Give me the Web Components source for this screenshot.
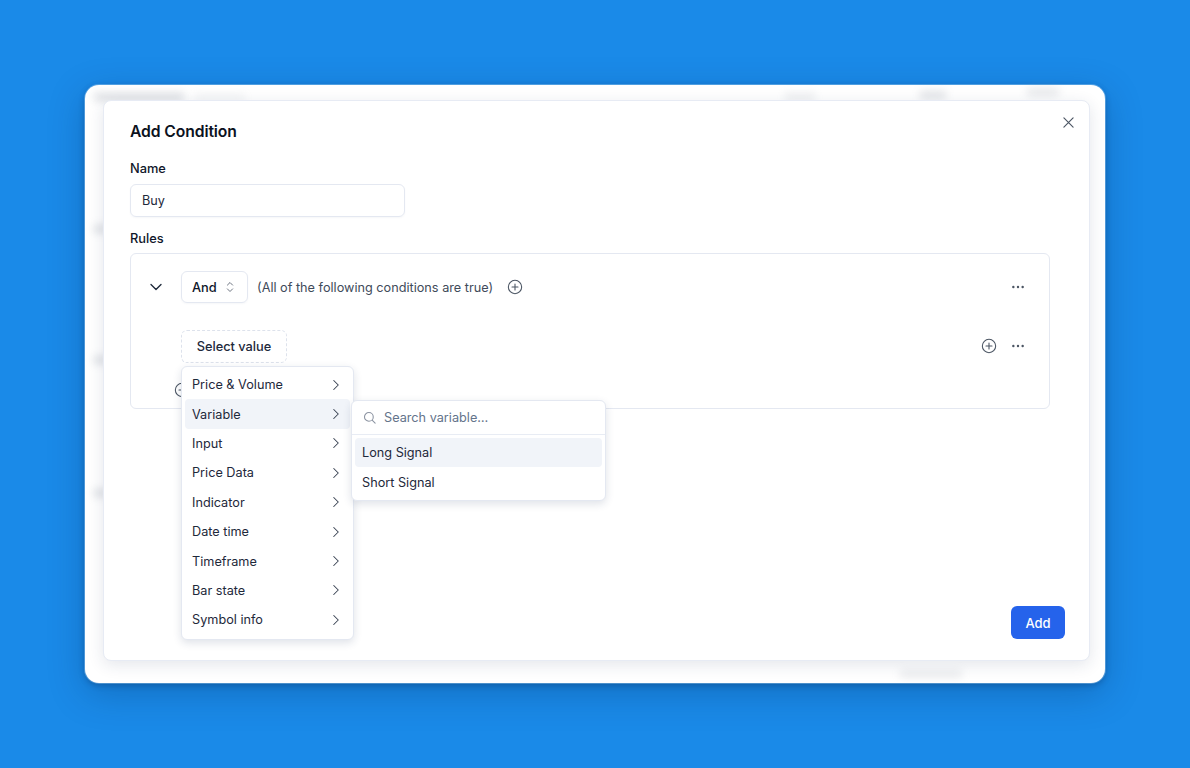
<!DOCTYPE html>
<html lang="en">
<head>
<meta charset="utf-8">
<title>Add Condition</title>
<style>
  html, body { margin: 0; height: 100%; }
  body { background: #1a8ae8; font-family: Inter, "Liberation Sans", sans-serif; overflow: hidden; }
</style>
</head>
<body>
<app-frame>
  <condition-dialog heading="Add Condition">
    <form-field label="Name"><text-box value="Buy"></text-box></form-field>
    <form-field label="Rules">
      <rule-box>
        <rule-row indent="0">
          <svg-icon slot="lead" name="chevron-down" size="20" color="#1e293b"></svg-icon>
          <and-select></and-select>
          <span-note>(All of the following conditions are true)</span-note>
          <svg-icon name="plus-circle" size="16" color="#4b5563" style="margin-left:14px"></svg-icon>
          <svg-icon slot="end" name="dots" size="16" color="#4b5563"></svg-icon>
        </rule-row>
        <rule-row indent="50" style="margin-top:27px">
          <dashed-select>Select value</dashed-select>
          <svg-icon slot="end" name="plus-circle" size="16" color="#4b5563" style="margin-right:13px"></svg-icon>
          <svg-icon slot="end" name="dots" size="16" color="#4b5563"></svg-icon>
        </rule-row>
        <rule-row indent="43" height="16" style="margin-top:20px">
          <svg-icon name="plus-circle" size="16" color="#4b5563"></svg-icon>
        </rule-row>
      </rule-box>
    </form-field>
    <primary-button slot="footer">Add</primary-button>
    <category-menu slot="overlay">
      <menu-item>Price &amp; Volume</menu-item>
      <menu-item active>Variable</menu-item>
      <menu-item>Input</menu-item>
      <menu-item>Price Data</menu-item>
      <menu-item>Indicator</menu-item>
      <menu-item>Date time</menu-item>
      <menu-item>Timeframe</menu-item>
      <menu-item>Bar state</menu-item>
      <menu-item>Symbol info</menu-item>
    </category-menu>
    <variable-menu slot="overlay">
      <menu-item plain active>Long Signal</menu-item>
      <menu-item plain>Short Signal</menu-item>
    </variable-menu>
  </condition-dialog>
</app-frame>

<script>
const ICONS = {
  "chevron-down": '<path d="M6 9l6 6 6-6"/>',
  "chevron-right": '<path d="M9 6l6 6-6 6"/>',
  "chevrons": '<path d="M8.5 9.5L12 6l3.5 3.5M8.5 14.5L12 18l3.5-3.5"/>',
  "plus-circle": '<circle cx="12" cy="12" r="10"/><path d="M12 7.5v9M7.5 12h9"/>',
  "x": '<path d="M5.5 5.5l13 13M18.5 5.5l-13 13"/>',
  "search": '<circle cx="11" cy="11" r="7"/><path d="M16.2 16.2L21 21"/>',
  "dots": '<circle cx="5" cy="12" r="1.8" fill="currentColor" stroke="none"/><circle cx="12" cy="12" r="1.8" fill="currentColor" stroke="none"/><circle cx="19" cy="12" r="1.8" fill="currentColor" stroke="none"/>'
};

class SvgIcon extends HTMLElement {
  connectedCallback() {
    const size = this.getAttribute("size") || 16;
    const color = this.getAttribute("color") || "#4b5563";
    const weight = this.getAttribute("weight") || 1.6;
    this.attachShadow({ mode: "open" }).innerHTML = `
      <style>
        :host { display: inline-flex; flex: none; color: ${color}; width: ${size}px; height: ${size}px; }
        svg { display: block; }
      </style>
      <svg width="${size}" height="${size}" viewBox="0 0 24 24" fill="none" stroke="currentColor"
        stroke-width="${weight}" stroke-linecap="round" stroke-linejoin="round">${ICONS[this.getAttribute("name")]}</svg>`;
  }
}

class AppFrame extends HTMLElement {
  constructor() {
    super();
    this.attachShadow({ mode: "open" }).innerHTML = `
      <style>
        :host { display: block; padding: 85px 0 0 85px; }
        .frame {
          position: relative; box-sizing: border-box; width: 1020px; height: 598px;
          padding: 15px 15px 22px 18px; background: #fff; border-radius: 14px;
          box-shadow: 0 0 0 1px rgba(190,225,255,.35), 0 2px 6px rgba(0,30,70,.3), 0 10px 36px rgba(0,40,90,.28);
        }
        /* blurred page behind the dialog */
        i { position: absolute; height: 8px; background: #9aa1ad; filter: blur(4px); opacity: .35; }
      </style>
      <div class="frame">
        <i style="left:9px;top:8px;width:90px"></i>
        <i style="left:110px;top:9px;width:50px;opacity:.12"></i>
        <i style="left:700px;top:8px;width:30px;opacity:.18"></i>
        <i style="left:835px;top:6px;width:26px;opacity:.3"></i>
        <i style="left:942px;top:3px;width:32px;opacity:.25"></i>
        <i style="left:9px;top:140px;width:12px"></i>
        <i style="left:9px;top:271px;width:12px"></i>
        <i style="left:9px;top:404px;width:12px"></i>
        <i style="left:815px;top:585px;width:62px;opacity:.2"></i>
        <slot></slot>
      </div>`;
  }
}

class ConditionDialog extends HTMLElement {
  constructor() {
    super();
    this.attachShadow({ mode: "open" }).innerHTML = `
      <style>
        :host {
          display: block; position: relative; box-sizing: border-box; height: 100%;
          background: #fff; border: 1px solid #e7ebf4; border-radius: 8px;
          box-shadow: 0 4px 16px rgba(30,50,90,.12); color: #0f172a;
        }
        .body { display: flex; flex-direction: column; height: 100%; box-sizing: border-box; padding: 21px 24px 21px 26px; }
        h2 { margin: 0 0 18px; font-size: 15.7px; line-height: 20px; font-weight: 600; letter-spacing: -.1px; color: #0b1220; }
        .fields { flex: 1; padding-right: 15px; }
        .footer { display: flex; justify-content: flex-end; }
        .close { position: absolute; top: 13px; right: 12px; display: flex; }
      </style>
      <div class="body">
        <h2></h2>
        <div class="fields"><slot></slot></div>
        <div class="footer"><slot name="footer"></slot></div>
      </div>
      <span class="close"><svg-icon name="x" size="17" color="#4b5563"></svg-icon></span>
      <slot name="overlay"></slot>`;
    this.shadowRoot.querySelector("h2").textContent = this.getAttribute("heading");
  }
}

class FormField extends HTMLElement {
  constructor() {
    super();
    this.attachShadow({ mode: "open" }).innerHTML = `
      <style>
        :host { display: block; margin-bottom: 13px; }
        label { display: block; font-size: 12.8px; line-height: 18px; font-weight: 500; margin-bottom: 5px; color: #0f172a; }
      </style>
      <label></label><slot></slot>`;
    this.shadowRoot.querySelector("label").textContent = this.getAttribute("label");
  }
}

class TextBox extends HTMLElement {
  constructor() {
    super();
    this.attachShadow({ mode: "open" }).innerHTML = `
      <style>
        :host {
          display: block; box-sizing: border-box; width: 275px; height: 33px; margin-top: 6px; padding: 0 11px;
          border: 1px solid #e4e8f1; border-radius: 6px; font-size: 12.7px; line-height: 31px; color: #1e293b;
          box-shadow: 0 1px 2px rgba(30,50,90,.04);
        }
      </style><span></span>`;
    this.shadowRoot.querySelector("span").textContent = this.getAttribute("value");
  }
}

class RuleBox extends HTMLElement {
  constructor() {
    super();
    this.attachShadow({ mode: "open" }).innerHTML = `
      <style>
        :host {
          display: block; box-sizing: border-box; height: 156px; padding: 17px 23px 0 0;
          border: 1px solid #e4e8f1; border-radius: 6px; overflow: hidden;
        }
      </style><slot></slot>`;
  }
}

class RuleRow extends HTMLElement {
  constructor() {
    super();
    const lead = this.querySelector('[slot="lead"]') ? '<span class="lead"><slot name="lead"></slot></span>' : "";
    this.attachShadow({ mode: "open" }).innerHTML = `
      <style>
        :host {
          display: flex; align-items: center; height: ${this.getAttribute("height") || 32}px;
          padding-left: ${this.getAttribute("indent")}px; font-size: 12.7px;
        }
        .lead { display: flex; width: 50px; justify-content: center; }
        .main { display: flex; align-items: center; flex: 1; }
        .end { display: flex; align-items: center; }
      </style>
      ${lead}
      <div class="main"><slot></slot></div>
      <div class="end"><slot name="end"></slot></div>`;
  }
}

class AndSelect extends HTMLElement {
  constructor() {
    super();
    this.attachShadow({ mode: "open" }).innerHTML = `
      <style>
        :host {
          display: flex; align-items: center; box-sizing: border-box; width: 67px; height: 32px; padding-left: 10px;
          border: 1px solid #e4e8f1; border-radius: 6px; font-size: 12.8px; font-weight: 500; color: #0f172a;
          box-shadow: 0 1px 2px rgba(30,50,90,.04);
        }
        svg-icon { margin-left: 4px; }
      </style>
      And<svg-icon name="chevrons" size="18" color="#6b7280" weight="1.3"></svg-icon>`;
  }
}

class SpanNote extends HTMLElement {
  constructor() {
    super();
    this.attachShadow({ mode: "open" }).innerHTML = `
      <style>:host { display: inline-block; margin-left: 9px; font-size: 12.7px; color: #414b5a; white-space: nowrap; }</style>
      <slot></slot>`;
  }
}

class DashedSelect extends HTMLElement {
  constructor() {
    super();
    this.attachShadow({ mode: "open" }).innerHTML = `
      <style>
        :host {
          display: flex; align-items: center; justify-content: center; box-sizing: border-box; width: 106px; height: 33px;
          border: 1px dashed #dde2ec; border-radius: 6px; font-size: 12.8px; font-weight: 500; color: #1e293b;
        }
      </style><slot></slot>`;
  }
}

class PrimaryButton extends HTMLElement {
  constructor() {
    super();
    this.attachShadow({ mode: "open" }).innerHTML = `
      <style>
        :host {
          display: flex; align-items: center; justify-content: center; width: 54px; height: 33px;
          background: #2563eb; border-radius: 6px; color: #fff; font-size: 13px; font-weight: 500;
        }
      </style><slot></slot>`;
  }
}

class MenuItem extends HTMLElement {
  constructor() {
    super();
    const arrow = this.hasAttribute("plain") ? "" : '<svg-icon name="chevron-right" size="18" color="#374151" weight="1.4"></svg-icon>';
    this.attachShadow({ mode: "open" }).innerHTML = `
      <style>
        :host {
          display: flex; align-items: center; justify-content: space-between; height: 29.4px; padding: 0 5px 0 7px;
          border-radius: 4px; font-size: 12.7px; color: #1e293b;
        }
        :host([active]) { background: #f1f4f9; }
      </style>
      <slot></slot>${arrow}`;
  }
}

const POPUP_CSS = `
  position: absolute; box-sizing: border-box; background: #fff; border: 1px solid #e4e8f1; border-radius: 6px;
  box-shadow: 0 3px 8px rgba(30,50,90,.14);`;

class CategoryMenu extends HTMLElement {
  constructor() {
    super();
    this.attachShadow({ mode: "open" }).innerHTML = `
      <style>
        :host { ${POPUP_CSS} display: block; left: 77px; top: 265px; width: 173px; padding: 3px 3px 4px; }
      </style><slot></slot>`;
  }
}

class VariableMenu extends HTMLElement {
  constructor() {
    super();
    this.attachShadow({ mode: "open" }).innerHTML = `
      <style>
        :host { ${POPUP_CSS} display: block; left: 247px; top: 299px; width: 255px; }
        .search {
          display: flex; align-items: center; gap: 7px; height: 33px; padding: 0 10px;
          border-bottom: 1px solid #e8ecf4; font-size: 12.7px; color: #64748b;
        }
        .list { padding: 3px 3px; }
      </style>
      <div class="search"><svg-icon name="search" size="15" color="#8b93a1" weight="1.7"></svg-icon>Search variable…</div>
      <div class="list"><slot></slot></div>`;
  }
}

customElements.define("svg-icon", SvgIcon);
customElements.define("app-frame", AppFrame);
customElements.define("condition-dialog", ConditionDialog);
customElements.define("form-field", FormField);
customElements.define("text-box", TextBox);
customElements.define("rule-box", RuleBox);
customElements.define("rule-row", RuleRow);
customElements.define("and-select", AndSelect);
customElements.define("span-note", SpanNote);
customElements.define("dashed-select", DashedSelect);
customElements.define("primary-button", PrimaryButton);
customElements.define("menu-item", MenuItem);
customElements.define("category-menu", CategoryMenu);
customElements.define("variable-menu", VariableMenu);
</script>
</body>
</html>
